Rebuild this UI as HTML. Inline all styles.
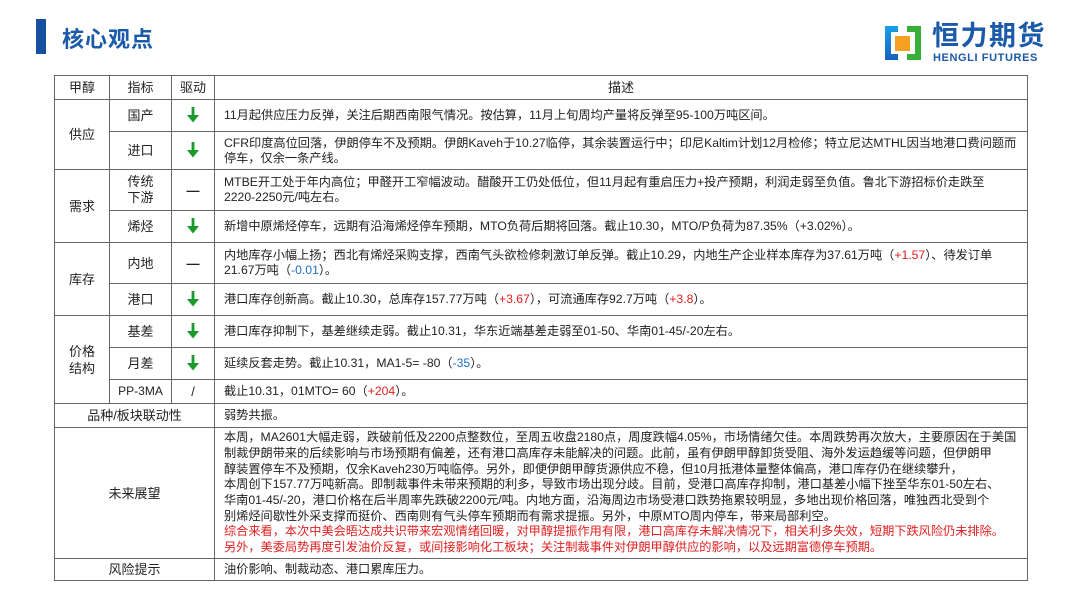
<!DOCTYPE html>
<html><head><meta charset="utf-8">
<style>
body{margin:0;width:1080px;height:608px;background:#fff;position:relative;overflow:hidden;font-family:"Liberation Sans","Noto Sans CJK SC",sans-serif;color:#222}
.bar{position:absolute;left:36px;top:19px;width:10px;height:35px;background:#1650a0}
.title{position:absolute;left:62px;top:22px;font-size:22px;font-weight:bold;color:#1a5aa8;letter-spacing:1px}
table{position:absolute;left:54px;top:75px;border-collapse:collapse;table-layout:fixed;width:974px;font-size:12.2px}
td{border:1px solid #666;padding:0;vertical-align:middle;line-height:15px}
.c{text-align:center;font-size:13px}
.d{padding:0 2px 0 9px;white-space:nowrap;overflow:hidden}
.r{color:#e02020}.b{color:#2070c0}
</style></head><body>
<div class="bar"></div>
<div class="title">核心观点</div>
<svg style="position:absolute;left:883px;top:23px" width="40" height="40" viewBox="0 0 40 40">
<defs><linearGradient id="g1" x1="0" y1="0" x2="0" y2="1"><stop offset="0" stop-color="#1aa0e8"/><stop offset="1" stop-color="#1660c0"/></linearGradient></defs>
<path d="M2 3h13v6h-7v22h7v6H2z" fill="url(#g1)"/>
<path d="M24 3h14v34H24v-6h8V9h-8z" fill="#3aae3a"/>
<rect x="12" y="13" width="15" height="15" fill="#f5a020"/>
</svg>
<div style="position:absolute;left:932px;top:21px;font-size:27px;font-weight:bold;color:#1a5aa8;letter-spacing:1.5px;line-height:30px">恒力期货</div>
<div style="position:absolute;left:933px;top:52px;font-size:11px;font-weight:bold;color:#1a5aa8;letter-spacing:0.6px">HENGLI FUTURES</div>
<svg width="0" height="0" style="position:absolute"><defs><g id="ar"><path d="M7 1v13" stroke="#1a9a2a" stroke-width="2.8"/><path d="M1 9L7 16.5 13 9z" fill="#1a9a2a"/></g></defs></svg>
<table>
<colgroup><col style="width:55px"><col style="width:62px"><col style="width:43px"><col></colgroup>
<tr style="height:24px"><td class="c">甲醇</td><td class="c">指标</td><td class="c">驱动</td><td class="c">描述</td></tr>
<tr style="height:32px"><td class="c" rowspan="2">供应</td><td class="c">国产</td><td class="c"><svg width="14" height="17"><use href="#ar"/></svg></td><td class="d">11月起供应压力反弹，关注后期西南限气情况。按估算，11月上旬周均产量将反弹至95-100万吨区间。</td></tr>
<tr style="height:38px"><td class="c">进口</td><td class="c"><svg width="14" height="17"><use href="#ar"/></svg></td><td class="d">CFR印度高位回落，伊朗停车不及预期。伊朗Kaveh于10.27临停，其余装置运行中；印尼Kaltim计划12月检修；特立尼达MTHL因当地港口费问题而<br>停车，仅余一条产线。</td></tr>
<tr style="height:41px"><td class="c" rowspan="2">需求</td><td class="c" style="line-height:16px">传统<br>下游</td><td class="c" style="font-weight:bold">—</td><td class="d">MTBE开工处于年内高位；甲醛开工窄幅波动。醋酸开工仍处低位，但11月起有重启压力+投产预期，利润走弱至负值。鲁北下游招标价走跌至<br>2220-2250元/吨左右。</td></tr>
<tr style="height:32px"><td class="c">烯烃</td><td class="c"><svg width="14" height="17"><use href="#ar"/></svg></td><td class="d">新增中原烯烃停车，远期有沿海烯烃停车预期，MTO负荷后期将回落。截止10.30，MTO/P负荷为87.35%（+3.02%）。</td></tr>
<tr style="height:41px"><td class="c" rowspan="2">库存</td><td class="c">内地</td><td class="c" style="font-weight:bold">—</td><td class="d">内地库存小幅上扬；西北有烯烃采购支撑，西南气头欲检修刺激订单反弹。截止10.29，内地生产企业样本库存为37.61万吨（<span class="r">+1.57</span>）、待发订单<br>21.67万吨（<span class="b">-0.01</span>）。</td></tr>
<tr style="height:32px"><td class="c">港口</td><td class="c"><svg width="14" height="17"><use href="#ar"/></svg></td><td class="d">港口库存创新高。截止10.30，总库存157.77万吨（<span class="r">+3.67</span>），可流通库存92.7万吨（<span class="r">+3.8</span>）。</td></tr>
<tr style="height:32px"><td class="c" rowspan="3" style="line-height:17px">价格<br>结构</td><td class="c">基差</td><td class="c"><svg width="14" height="17"><use href="#ar"/></svg></td><td class="d">港口库存抑制下，基差继续走弱。截止10.31，华东近端基差走弱至01-50、华南01-45/-20左右。</td></tr>
<tr style="height:32px"><td class="c">月差</td><td class="c"><svg width="14" height="17"><use href="#ar"/></svg></td><td class="d">延续反套走势。截止10.31，MA1-5= -80（<span class="b">-35</span>）。</td></tr>
<tr style="height:24px"><td class="c" style="font-size:12px">PP-3MA</td><td class="c">/</td><td class="d">截止10.31，01MTO= 60（<span class="r">+204</span>）。</td></tr>
<tr style="height:24px"><td class="c" colspan="3">品种/板块联动性</td><td class="d">弱势共振。</td></tr>
<tr style="height:131px"><td class="c" colspan="3">未来展望</td><td class="d" style="line-height:15.7px">本周，MA2601大幅走弱，跌破前低及2200点整数位，至周五收盘2180点，周度跌幅4.05%，市场情绪欠佳。本周跌势再次放大，主要原因在于美国<br>制裁伊朗带来的后续影响与市场预期有偏差，还有港口高库存未能解决的问题。此前，虽有伊朗甲醇卸货受阻、海外发运趋缓等问题，但伊朗甲<br>醇装置停车不及预期，仅余Kaveh230万吨临停。另外，即便伊朗甲醇货源供应不稳，但10月抵港体量整体偏高，港口库存仍在继续攀升，<br>本周创下157.77万吨新高。即制裁事件未带来预期的利多，导致市场出现分歧。目前，受港口高库存抑制，港口基差小幅下挫至华东01-50左右、<br>华南01-45/-20，港口价格在后半周率先跌破2200元/吨。内地方面，沿海周边市场受港口跌势拖累较明显，多地出现价格回落，唯独西北受到个<br>别烯烃间歇性外采支撑而挺价、西南则有气头停车预期而有需求提振。另外，中原MTO周内停车，带来局部利空。<br><span class="r">综合来看，本次中美会晤达成共识带来宏观情绪回暖，对甲醇提振作用有限，港口高库存未解决情况下，相关利多失效，短期下跌风险仍未排除。<br>另外，美委局势再度引发油价反复，或间接影响化工板块；关注制裁事件对伊朗甲醇供应的影响，以及远期富德停车预期。</span></td></tr>
<tr style="height:22px"><td class="c" colspan="3">风险提示</td><td class="d">油价影响、制裁动态、港口累库压力。</td></tr>
</table>
</body></html>
